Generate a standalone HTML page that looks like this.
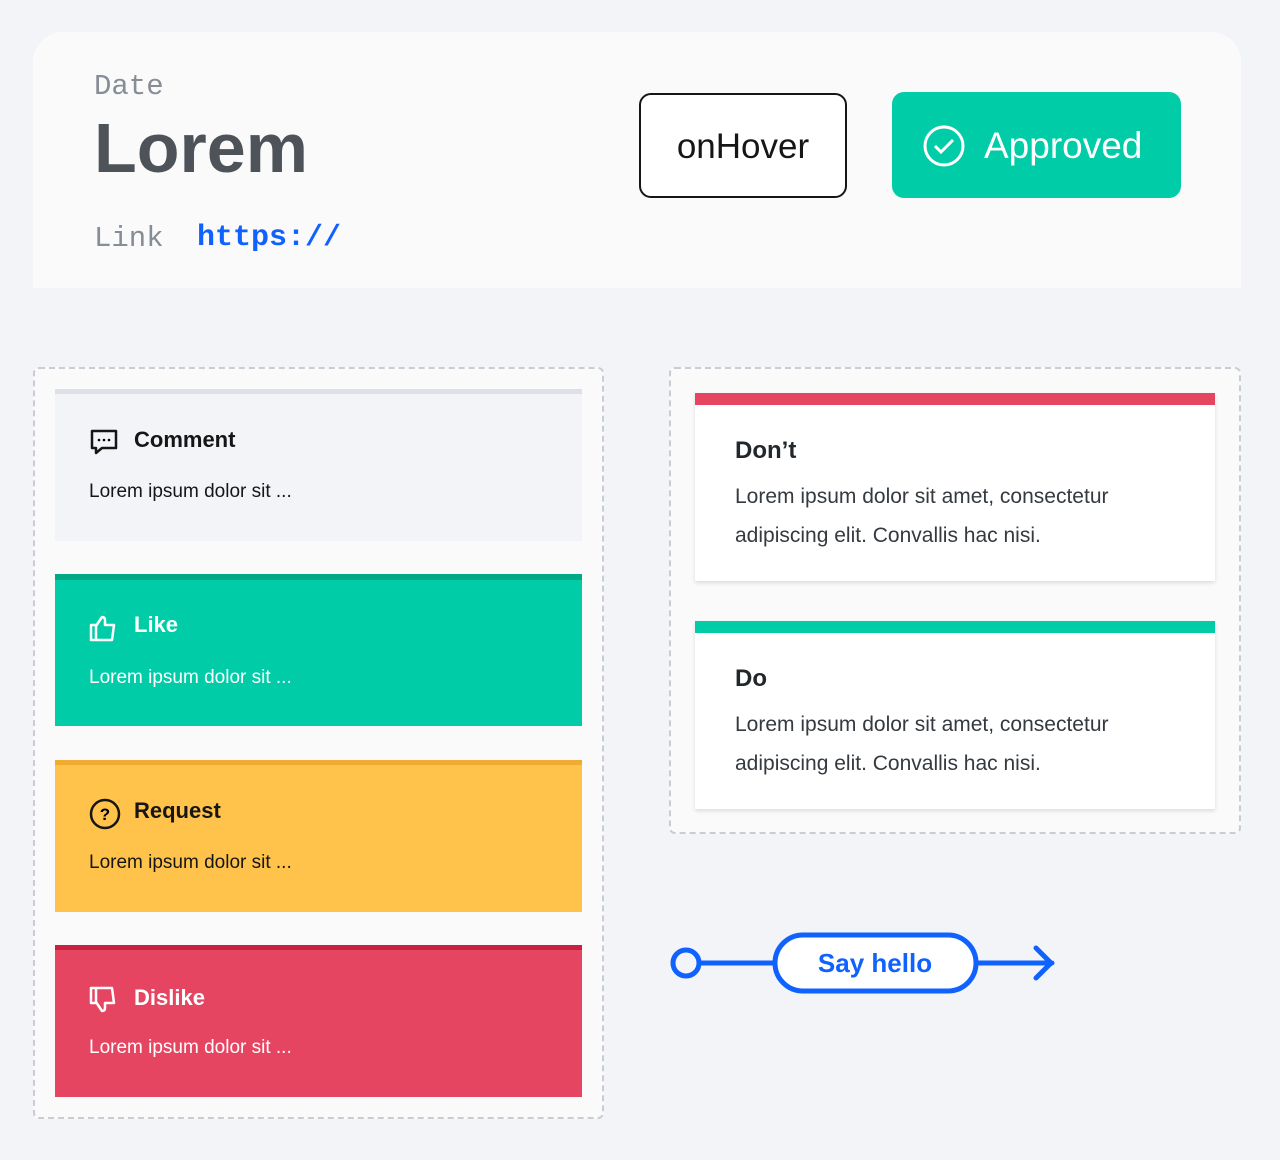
<!DOCTYPE html>
<html><head><style>
*{margin:0;padding:0;box-sizing:border-box}
body{width:1280px;height:1160px;background:#f2f4f8;font-family:"Liberation Sans",sans-serif;position:relative;overflow:hidden}
.abs{position:absolute}
.top{left:33px;top:32px;width:1208px;height:256px;background:#fafafa;border-radius:30px 30px 0 0}
.mono{font-family:"Liberation Mono",monospace}
.dash{border:2px dashed #c9ccd2;border-radius:6px;background:#fafafa}
.card{position:absolute;left:55px;width:527px;height:152px}
.card .h{position:absolute;left:79px;top:38px;font-weight:bold;font-size:22px}
.card .p{position:absolute;left:34px;top:92px;font-size:19px}
.card svg{position:absolute;left:34px;top:38px}
.dc{position:absolute;left:695px;width:520px;height:188px;background:#fff;box-shadow:0 2px 4px rgba(0,0,0,.12)}
.dc .bar{height:12px}
.dc .t{position:absolute;left:40px;top:44px;font-weight:bold;font-size:24px;color:#21272a}
.dc .b{position:absolute;left:40px;top:84px;font-size:21px;line-height:39px;color:#343a3f;width:460px}
</style></head><body>
<div class="abs top"></div>
<div class="abs mono" style="left:94px;top:70px;font-size:29px;color:#878d96">Date</div>
<div class="abs" style="left:94px;top:108px;font-size:70px;font-weight:bold;color:#4d5358">Lorem</div>
<div class="abs mono" style="left:94px;top:222px;font-size:29px;color:#878d96">Link</div>
<div class="abs mono" style="left:197px;top:221px;font-size:30px;font-weight:bold;color:#0f62fe">https://</div>
<div class="abs" style="left:639px;top:93px;width:208px;height:105px;border:2px solid #161616;border-radius:12px;background:#fff;font-size:35px;color:#161616;text-align:center;line-height:103px">onHover</div>
<div class="abs" style="left:892px;top:92px;width:289px;height:106px;border-radius:12px;background:#00cca8;color:#fff;font-size:37px;line-height:108px;padding-left:92px">Approved</div>
<svg class="abs" style="left:922px;top:124px" width="44" height="44" viewBox="0 0 44 44"><circle cx="22" cy="22" r="19" fill="none" stroke="#fff" stroke-width="3"/><path d="M13 22l6 6 12-12" fill="none" stroke="#fff" stroke-width="3"/></svg>

<div class="abs dash" style="left:33px;top:367px;width:571px;height:752px"></div>
<div class="card" style="top:389px;background:#f2f4f8;border-top:5px solid #dde1e6;color:#161616">
<svg width="30" height="30" viewBox="0 0 30 30" style="top:33px"><path d="M3 4h24v17H13l-6 5v-5H3z" fill="none" stroke="#161616" stroke-width="2.5" stroke-linejoin="round"/><circle cx="10" cy="13" r="1.3"/><circle cx="15" cy="13" r="1.3"/><circle cx="20" cy="13" r="1.3"/></svg>
<div class="h" style="top:33px">Comment</div><div class="p" style="top:87px">Lorem ipsum dolor sit ...</div></div>
<div class="card" style="top:574px;background:#00cca8;border-top:6px solid #00a884;color:#fff">
<svg width="30" height="30" viewBox="0 0 30 30" style="top:33px"><path d="M2 12h5v15H2zM7 13l6-9c2 0 3 1 3 3v5h9l-2 15H7" fill="none" stroke="#fff" stroke-width="2.5" stroke-linejoin="round"/></svg>
<div class="h" style="top:32px">Like</div><div class="p" style="top:87px">Lorem ipsum dolor sit ...</div></div>
<div class="card" style="top:760px;background:#ffc24a;border-top:5px solid #f0ab30;color:#161616">
<svg width="32" height="32" viewBox="0 0 32 32" style="top:33px"><circle cx="16" cy="16" r="14" fill="none" stroke="#161616" stroke-width="2.5"/><text x="16" y="22" font-size="17" font-weight="bold" text-anchor="middle" font-family="Liberation Sans">?</text></svg>
<div class="h" style="top:33px">Request</div><div class="p" style="top:87px">Lorem ipsum dolor sit ...</div></div>
<div class="card" style="top:945px;background:#e64561;border-top:5px solid #c8203e;color:#fff">
<svg width="30" height="30" viewBox="0 0 30 30" style="top:35px"><path d="M2 3h5v15H2zM7 17l6 9c2 0 3-1 3-3v-5h9L23 3H7" fill="none" stroke="#fff" stroke-width="2.5" stroke-linejoin="round"/></svg>
<div class="h" style="top:35px">Dislike</div><div class="p" style="top:87px">Lorem ipsum dolor sit ...</div></div>

<div class="abs dash" style="left:669px;top:367px;width:572px;height:467px"></div>
<div class="dc" style="top:393px"><div class="bar" style="background:#e64561"></div><div class="t">Don’t</div><div class="b">Lorem ipsum dolor sit amet, consectetur adipiscing elit. Convallis hac nisi.</div></div>
<div class="dc" style="top:621px"><div class="bar" style="background:#00cca8"></div><div class="t">Do</div><div class="b">Lorem ipsum dolor sit amet, consectetur adipiscing elit. Convallis hac nisi.</div></div>

<svg class="abs" style="left:660px;top:920px" width="420" height="90" viewBox="0 0 420 90">
<circle cx="26" cy="43" r="13" fill="none" stroke="#0f62fe" stroke-width="5"/>
<path d="M39 43h76M316 43h76M376 28l15 15-15 15" fill="none" stroke="#0f62fe" stroke-width="5" stroke-linecap="round" stroke-linejoin="round"/>
<rect x="115" y="15" width="201" height="56" rx="28" fill="#fff" stroke="#0f62fe" stroke-width="5"/>
<text x="215" y="52" text-anchor="middle" font-family="Liberation Sans" font-weight="bold" font-size="26" fill="#0f62fe">Say hello</text>
</svg>
</body></html>
